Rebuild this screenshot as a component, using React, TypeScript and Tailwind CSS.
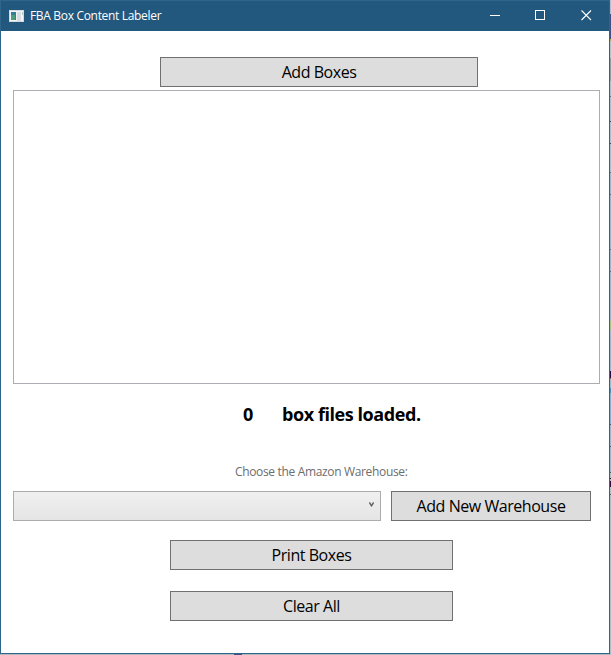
import React from "react";

const edge: [number, string][] = [
  [14, "#b4b9cc"], [25, "#41517f"], [2, "#c4a24a"], [17, "#b4c2cc"], [23, "#939da4"],
  [15, "#adbfcb"], [1, "#5f7182"], [24, "#adbfcb"], [1, "#3d4c5e"], [21, "#adbfcb"],
  [1, "#3d4c5e"], [28, "#adbfcb"], [1, "#5f7182"], [21, "#9db7c9"], [1, "#5f7182"],
  [54, "#9db7c9"], [1, "#5f7182"], [21, "#9db7c9"], [1, "#5f7182"], [49, "#9db7c9"],
  [9, "#a8c28c"], [41, "#9db7c9"], [7, "#2a0c3c"], [1, "#a86b50"], [9, "#9db7c9"],
  [5, "#4f8fb5"], [31, "#8eafc7"], [1, "#4b5b6b"], [21, "#9db7c9"], [1, "#4b5b6b"],
  [25, "#9db7c9"], [1, "#4b5b6b"], [5, "#b4bcc4"], [1, "#251030"], [2, "#b4bcc4"],
  [6, "#35083c"], [7, "#b4bcc4"], [1, "#4b5b6b"], [160, "#b0bdc8"],
];

function Button({ className, children }: { className: string; children: React.ReactNode }) {
  return (
    <button className={`h-[30px] shrink-0 border border-[#707070] bg-[#dddddd] text-base leading-[28px] tracking-[-0.45px] text-black whitespace-nowrap ${className}`}>
      {children}
    </button>
  );
}

export default function App() {
  return (
    <div className="flex h-[655px] w-[611px] flex-col overflow-hidden bg-white font-['Open_Sans','Noto_Sans',sans-serif]">
      <div className="flex h-[654px]">
        <main className="flex w-[610px] shrink-0 flex-col border border-[#30658b] bg-white">
          <header className="flex h-[30px] shrink-0 items-center bg-[#22577e] pl-2 text-white">
            <svg width="15" height="12" viewBox="0 0 15 12" shapeRendering="crispEdges">
              <path fill="#d5d9dd" d="M0 0h15v12H0z" />
              <path fill="#f3f4f5" d="M1 1h13v10H1z" />
              <path fill="#347f96" d="M2 2h5v8H2z" />
              <path fill="#4f9d80" d="M2 5h4v5H2z" />
              <path fill="#d9dce0" d="M8 2h4v9H8z" />
              <path fill="#a9cdbb" d="M13 2h1v3h-1z" />
            </svg>
            <h1 className="ml-1.5 grow text-[12px] leading-4 tracking-[-0.32px] whitespace-nowrap">FBA Box Content Labeler</h1>
            <svg width="138" height="30" viewBox="0 0 138 30" fill="none" stroke="white">
              <path d="M19 14.5h10M64.5 9.5h9v9h-9z" shapeRendering="crispEdges" />
              <path d="M110.5 9.5l9.5 9.5M120 9.5l-9.5 9.5" strokeWidth="1.1" />
            </svg>
          </header>
          <section className="flex grow flex-col pl-3">
            <Button className="mt-[26px] ml-[147px] w-[318px]">Add Boxes</Button>
            <div className="mt-[3px] h-[294px] w-[587px] shrink-0 border border-[#abadb3] bg-white" />
            <div className="mt-[18px] ml-[230px] flex h-6 shrink-0 text-lg leading-6 font-bold whitespace-nowrap text-black">
              <span className="w-[39px]">0</span>
              <span className="tracking-[-0.43px]">box files loaded.</span>
            </div>
            <p className="mt-[38px] ml-[222px] h-4 shrink-0 text-[12px] leading-4 tracking-[-0.34px] whitespace-nowrap text-[#6d6d6d]">Choose the Amazon Warehouse:</p>
            <div className="mt-[11px] flex shrink-0 gap-2.5">
              <div className="flex h-[30px] w-[368px] items-center justify-end border border-[#acacac] bg-linear-to-b from-[#f0f0f0] to-[#e5e5e5] pr-1.5 pb-[3px]">
                <svg width="5" height="5" viewBox="0 0 5 5" fill="none" stroke="#606060" strokeWidth="1.4">
                  <path d="M.4.5l2.1 3.3L4.6.5" />
                </svg>
              </div>
              <Button className="w-[200px]">Add New Warehouse</Button>
            </div>
            <Button className="mt-[19px] ml-[157px] w-[283px]">Print Boxes</Button>
            <Button className="mt-[21px] ml-[157px] w-[283px]">Clear All</Button>
          </section>
        </main>
        <div className="flex w-px shrink-0 flex-col overflow-hidden">
          {edge.map(([height, background], i) => (
            <div key={i} className="shrink-0" style={{ height, background }} />
          ))}
        </div>
      </div>
      <div className="flex h-px shrink-0 bg-[#b8b9bf] pl-[234px]">
        <div className="h-px w-2 bg-[#454f86]" />
      </div>
    </div>
  );
}
